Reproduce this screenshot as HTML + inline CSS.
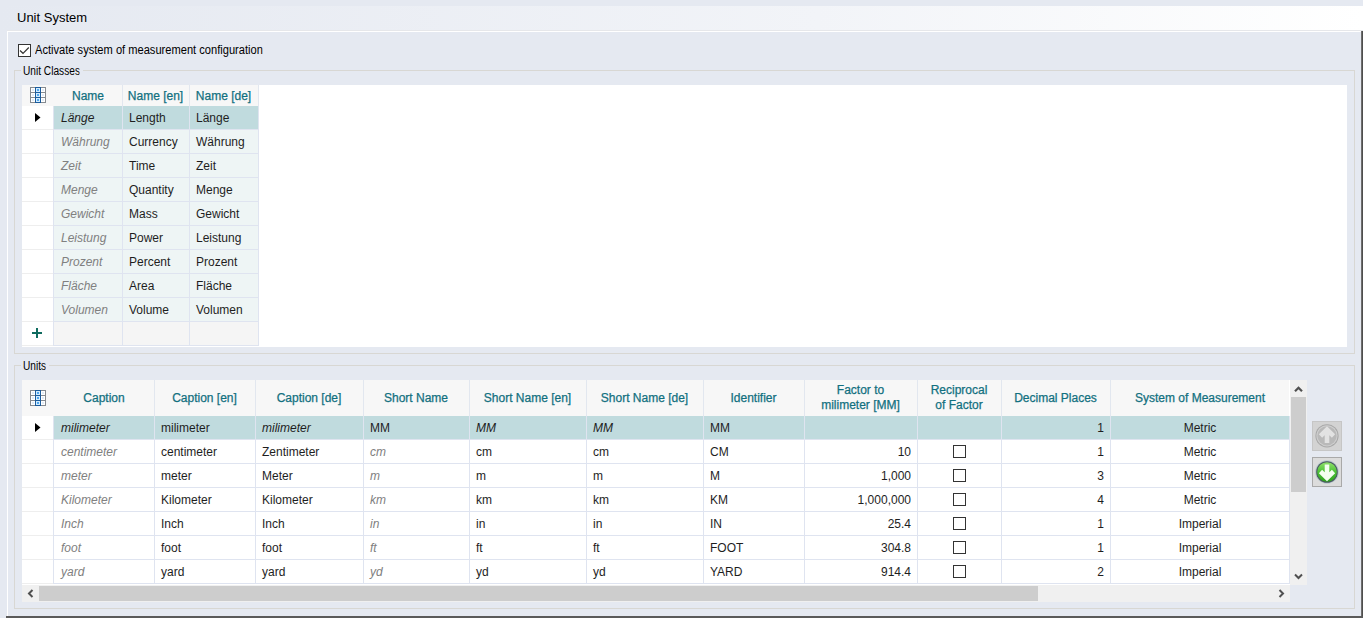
<!DOCTYPE html>
<html><head><meta charset="utf-8"><style>
html,body{margin:0;padding:0;}
body{width:1363px;height:618px;overflow:hidden;position:relative;background:#E5E9F1;font-family:"Liberation Sans", sans-serif;}
.r{position:absolute;box-sizing:border-box;}
svg.r{box-sizing:content-box;}
.c{position:absolute;box-sizing:border-box;font-size:12px;color:#1E1E1E;white-space:nowrap;overflow:hidden;}
.hdr{color:#12707F;-webkit-text-stroke:0.25px #12707F;}
.it{font-style:italic;color:#808080;}
.sel{color:#1E1E1E;}
.plus{color:#1C6E6A;font-size:18px;font-weight:bold;}
</style></head><body>
<div class="r" style="left:0;top:6px;width:1363px;height:24px;background:linear-gradient(to right,#E5E9F1 0%,#F2F4F8 60%,#FFFFFF 100%)"></div>
<div class="r" style="left:7px;top:30px;width:1356px;height:1px;background:#E6E7EA"></div>
<div class="c" style="left:17px;top:9px;font-size:13px;line-height:17px;color:#000">Unit System</div>
<div class="r" style="left:7px;top:31px;width:1356px;height:587px;border-top:1px solid #fff;border-left:1px solid #fff;"></div>
<div class="r" style="left:1361px;top:31px;width:1px;height:587px;background:#6E6E6E"></div>
<div class="r" style="left:1362px;top:31px;width:1px;height:587px;background:#4E4E4E"></div>
<div class="r" style="left:6px;top:616px;width:1357px;height:2px;background:#5A5A5A"></div>
<div class="r" style="left:18px;top:44px;width:13px;height:13px;border:1px solid #333;background:#fff"></div>
<svg class="r" style="left:18px;top:44px" width="13" height="13"><path d="M2 6.5 L5 9.3 L10.8 3.5" fill="none" stroke="#333" stroke-width="1.2"/></svg>
<div class="c" style="left:35px;top:43px;line-height:14px;font-size:12px;color:#000;transform:scaleX(0.926);transform-origin:0 0">Activate system of measurement configuration</div>
<div class="r" style="left:14px;top:70px;width:1341px;height:284px;border:1px solid #D8D7D3;"></div>
<div class="r" style="left:21px;top:64px;width:62px;height:13px;background:#E5E9F1"></div>
<div class="c" style="left:23px;top:65px;line-height:13px;font-size:12px;color:#000;transform:scaleX(0.846);transform-origin:0 0">Unit Classes</div>
<div class="r" style="left:14px;top:365px;width:1341px;height:244px;border:1px solid #D8D7D3;"></div>
<div class="r" style="left:21px;top:359px;width:28px;height:13px;background:#E5E9F1"></div>
<div class="c" style="left:23px;top:360px;line-height:13px;font-size:12px;color:#000;transform:scaleX(0.846);transform-origin:0 0">Units</div>
<div class="r" style="left:22px;top:85px;width:1325px;height:262px;background:#fff"></div>
<div class="r" style="left:22px;top:85px;width:236px;height:21px;background:#F7F7F7"></div>
<svg class="r" style="left:30px;top:87px" width="16" height="16" viewBox="0 0 16 16">
<rect x="0.5" y="0.5" width="15" height="15" fill="#fff" stroke="#858a90"/>
<line x1="0" y1="5.5" x2="16" y2="5.5" stroke="#858a90"/><line x1="0" y1="10.5" x2="16" y2="10.5" stroke="#858a90"/>
<rect x="5.5" y="0.5" width="5" height="15" fill="#D2ECFF" stroke="#1C5C9C"/>
<line x1="5" y1="5.5" x2="11" y2="5.5" stroke="#1C5C9C"/><line x1="5" y1="10.5" x2="11" y2="10.5" stroke="#1C5C9C"/>
<rect x="7" y="2" width="2" height="2" fill="#4FA6EE"/><rect x="7" y="7" width="2" height="2" fill="#4FA6EE"/><rect x="7" y="12" width="2" height="2" fill="#4FA6EE"/>
<g fill="#E2ECF7"><rect x="2" y="2" width="2" height="2"/><rect x="12" y="2" width="2" height="2"/><rect x="2" y="7" width="2" height="2"/><rect x="12" y="7" width="2" height="2"/><rect x="2" y="12" width="2" height="2"/><rect x="12" y="12" width="2" height="2"/></g>
</svg>
<div class="c hdr" style="left:54px;top:86px;width:68px;height:21px;line-height:21px;text-align:center;padding:0 0px;">Name</div>
<div class="r" style="left:122px;top:85px;width:1px;height:21px;background:#E2E7EF"></div>
<div class="c hdr" style="left:122px;top:86px;width:67px;height:21px;line-height:21px;text-align:center;padding:0 0px;">Name [en]</div>
<div class="r" style="left:189px;top:85px;width:1px;height:21px;background:#E2E7EF"></div>
<div class="c hdr" style="left:189px;top:86px;width:69px;height:21px;line-height:21px;text-align:center;padding:0 0px;">Name [de]</div>
<div class="r" style="left:258px;top:85px;width:1px;height:21px;background:#E2E7EF"></div>
<div class="r" style="left:54px;top:106px;width:204px;height:24px;background:#C0DBDE"></div>
<div class="c it sel" style="left:54px;top:107px;width:68px;height:23px;line-height:23px;text-align:left;padding:0 7px;">Länge</div>
<div class="c " style="left:122px;top:107px;width:67px;height:23px;line-height:23px;text-align:left;padding:0 7px;">Length</div>
<div class="c " style="left:189px;top:107px;width:69px;height:23px;line-height:23px;text-align:left;padding:0 7px;">Länge</div>
<div class="r" style="left:22px;top:129px;width:31px;height:1px;background:#EEEEEE"></div>
<div class="r" style="left:54px;top:129px;width:204px;height:1px;background:#DFE4F0"></div>
<svg class="r" style="left:35px;top:113px" width="6" height="9" viewBox="0 0 6 9"><path d="M0 0 L5.5 4.5 L0 9 Z" fill="#000"/></svg>
<div class="r" style="left:54px;top:130px;width:204px;height:24px;background:#EEF5F5"></div>
<div class="c it" style="left:54px;top:131px;width:68px;height:23px;line-height:23px;text-align:left;padding:0 7px;">Währung</div>
<div class="c " style="left:122px;top:131px;width:67px;height:23px;line-height:23px;text-align:left;padding:0 7px;">Currency</div>
<div class="c " style="left:189px;top:131px;width:69px;height:23px;line-height:23px;text-align:left;padding:0 7px;">Währung</div>
<div class="r" style="left:22px;top:153px;width:31px;height:1px;background:#EEEEEE"></div>
<div class="r" style="left:54px;top:153px;width:204px;height:1px;background:#DFE4F0"></div>
<div class="r" style="left:54px;top:154px;width:204px;height:24px;background:#EEF5F5"></div>
<div class="c it" style="left:54px;top:155px;width:68px;height:23px;line-height:23px;text-align:left;padding:0 7px;">Zeit</div>
<div class="c " style="left:122px;top:155px;width:67px;height:23px;line-height:23px;text-align:left;padding:0 7px;">Time</div>
<div class="c " style="left:189px;top:155px;width:69px;height:23px;line-height:23px;text-align:left;padding:0 7px;">Zeit</div>
<div class="r" style="left:22px;top:177px;width:31px;height:1px;background:#EEEEEE"></div>
<div class="r" style="left:54px;top:177px;width:204px;height:1px;background:#DFE4F0"></div>
<div class="r" style="left:54px;top:178px;width:204px;height:24px;background:#EEF5F5"></div>
<div class="c it" style="left:54px;top:179px;width:68px;height:23px;line-height:23px;text-align:left;padding:0 7px;">Menge</div>
<div class="c " style="left:122px;top:179px;width:67px;height:23px;line-height:23px;text-align:left;padding:0 7px;">Quantity</div>
<div class="c " style="left:189px;top:179px;width:69px;height:23px;line-height:23px;text-align:left;padding:0 7px;">Menge</div>
<div class="r" style="left:22px;top:201px;width:31px;height:1px;background:#EEEEEE"></div>
<div class="r" style="left:54px;top:201px;width:204px;height:1px;background:#DFE4F0"></div>
<div class="r" style="left:54px;top:202px;width:204px;height:24px;background:#EEF5F5"></div>
<div class="c it" style="left:54px;top:203px;width:68px;height:23px;line-height:23px;text-align:left;padding:0 7px;">Gewicht</div>
<div class="c " style="left:122px;top:203px;width:67px;height:23px;line-height:23px;text-align:left;padding:0 7px;">Mass</div>
<div class="c " style="left:189px;top:203px;width:69px;height:23px;line-height:23px;text-align:left;padding:0 7px;">Gewicht</div>
<div class="r" style="left:22px;top:225px;width:31px;height:1px;background:#EEEEEE"></div>
<div class="r" style="left:54px;top:225px;width:204px;height:1px;background:#DFE4F0"></div>
<div class="r" style="left:54px;top:226px;width:204px;height:24px;background:#EEF5F5"></div>
<div class="c it" style="left:54px;top:227px;width:68px;height:23px;line-height:23px;text-align:left;padding:0 7px;">Leistung</div>
<div class="c " style="left:122px;top:227px;width:67px;height:23px;line-height:23px;text-align:left;padding:0 7px;">Power</div>
<div class="c " style="left:189px;top:227px;width:69px;height:23px;line-height:23px;text-align:left;padding:0 7px;">Leistung</div>
<div class="r" style="left:22px;top:249px;width:31px;height:1px;background:#EEEEEE"></div>
<div class="r" style="left:54px;top:249px;width:204px;height:1px;background:#DFE4F0"></div>
<div class="r" style="left:54px;top:250px;width:204px;height:24px;background:#EEF5F5"></div>
<div class="c it" style="left:54px;top:251px;width:68px;height:23px;line-height:23px;text-align:left;padding:0 7px;">Prozent</div>
<div class="c " style="left:122px;top:251px;width:67px;height:23px;line-height:23px;text-align:left;padding:0 7px;">Percent</div>
<div class="c " style="left:189px;top:251px;width:69px;height:23px;line-height:23px;text-align:left;padding:0 7px;">Prozent</div>
<div class="r" style="left:22px;top:273px;width:31px;height:1px;background:#EEEEEE"></div>
<div class="r" style="left:54px;top:273px;width:204px;height:1px;background:#DFE4F0"></div>
<div class="r" style="left:54px;top:274px;width:204px;height:24px;background:#EEF5F5"></div>
<div class="c it" style="left:54px;top:275px;width:68px;height:23px;line-height:23px;text-align:left;padding:0 7px;">Fläche</div>
<div class="c " style="left:122px;top:275px;width:67px;height:23px;line-height:23px;text-align:left;padding:0 7px;">Area</div>
<div class="c " style="left:189px;top:275px;width:69px;height:23px;line-height:23px;text-align:left;padding:0 7px;">Fläche</div>
<div class="r" style="left:22px;top:297px;width:31px;height:1px;background:#EEEEEE"></div>
<div class="r" style="left:54px;top:297px;width:204px;height:1px;background:#DFE4F0"></div>
<div class="r" style="left:54px;top:298px;width:204px;height:24px;background:#EEF5F5"></div>
<div class="c it" style="left:54px;top:299px;width:68px;height:23px;line-height:23px;text-align:left;padding:0 7px;">Volumen</div>
<div class="c " style="left:122px;top:299px;width:67px;height:23px;line-height:23px;text-align:left;padding:0 7px;">Volume</div>
<div class="c " style="left:189px;top:299px;width:69px;height:23px;line-height:23px;text-align:left;padding:0 7px;">Volumen</div>
<div class="r" style="left:22px;top:321px;width:31px;height:1px;background:#EEEEEE"></div>
<div class="r" style="left:54px;top:321px;width:204px;height:1px;background:#DFE4F0"></div>
<div class="r" style="left:54px;top:322px;width:204px;height:23px;background:#F5F5F5"></div>
<div class="r" style="left:22px;top:345px;width:31px;height:1px;background:#EEEEEE"></div>
<div class="r" style="left:54px;top:345px;width:204px;height:1px;background:#DFE4F0"></div>
<svg class="r" style="left:32px;top:328px" width="10" height="10"><path d="M0 5 H10 M5 0 V10" stroke="#0F6B5F" stroke-width="2"/></svg>
<div class="r" style="left:122px;top:106px;width:1px;height:240px;background:#DFE4F0"></div>
<div class="r" style="left:189px;top:106px;width:1px;height:240px;background:#DFE4F0"></div>
<div class="r" style="left:258px;top:106px;width:1px;height:240px;background:#DFE4F0"></div>
<div class="r" style="left:53px;top:106px;width:1px;height:240px;background:#DFE4F0"></div>
<div class="r" style="left:22px;top:380px;width:1268px;height:205px;background:#fff"></div>
<div class="r" style="left:22px;top:380px;width:1267px;height:36px;background:#F7F7F7"></div>
<svg class="r" style="left:30px;top:390px" width="16" height="16" viewBox="0 0 16 16">
<rect x="0.5" y="0.5" width="15" height="15" fill="#fff" stroke="#858a90"/>
<line x1="0" y1="5.5" x2="16" y2="5.5" stroke="#858a90"/><line x1="0" y1="10.5" x2="16" y2="10.5" stroke="#858a90"/>
<rect x="5.5" y="0.5" width="5" height="15" fill="#D2ECFF" stroke="#1C5C9C"/>
<line x1="5" y1="5.5" x2="11" y2="5.5" stroke="#1C5C9C"/><line x1="5" y1="10.5" x2="11" y2="10.5" stroke="#1C5C9C"/>
<rect x="7" y="2" width="2" height="2" fill="#4FA6EE"/><rect x="7" y="7" width="2" height="2" fill="#4FA6EE"/><rect x="7" y="12" width="2" height="2" fill="#4FA6EE"/>
<g fill="#E2ECF7"><rect x="2" y="2" width="2" height="2"/><rect x="12" y="2" width="2" height="2"/><rect x="2" y="7" width="2" height="2"/><rect x="12" y="7" width="2" height="2"/><rect x="2" y="12" width="2" height="2"/><rect x="12" y="12" width="2" height="2"/></g>
</svg>
<div class="c hdr" style="left:54px;top:380px;width:100px;height:36px;line-height:36px;text-align:center;padding:0 0px;">Caption</div>
<div class="r" style="left:154px;top:380px;width:1px;height:36px;background:#E2E7EF"></div>
<div class="c hdr" style="left:154px;top:380px;width:101px;height:36px;line-height:36px;text-align:center;padding:0 0px;">Caption [en]</div>
<div class="r" style="left:255px;top:380px;width:1px;height:36px;background:#E2E7EF"></div>
<div class="c hdr" style="left:255px;top:380px;width:108px;height:36px;line-height:36px;text-align:center;padding:0 0px;">Caption [de]</div>
<div class="r" style="left:363px;top:380px;width:1px;height:36px;background:#E2E7EF"></div>
<div class="c hdr" style="left:363px;top:380px;width:106px;height:36px;line-height:36px;text-align:center;padding:0 0px;">Short Name</div>
<div class="r" style="left:469px;top:380px;width:1px;height:36px;background:#E2E7EF"></div>
<div class="c hdr" style="left:469px;top:380px;width:117px;height:36px;line-height:36px;text-align:center;padding:0 0px;">Short Name [en]</div>
<div class="r" style="left:586px;top:380px;width:1px;height:36px;background:#E2E7EF"></div>
<div class="c hdr" style="left:586px;top:380px;width:117px;height:36px;line-height:36px;text-align:center;padding:0 0px;">Short Name [de]</div>
<div class="r" style="left:703px;top:380px;width:1px;height:36px;background:#E2E7EF"></div>
<div class="c hdr" style="left:703px;top:380px;width:101px;height:36px;line-height:36px;text-align:center;padding:0 0px;">Identifier</div>
<div class="r" style="left:804px;top:380px;width:1px;height:36px;background:#E2E7EF"></div>
<div class="c hdr" style="left:804px;top:380px;width:113px;height:36px;text-align:center;line-height:15px;padding-top:3px">Factor to<br>milimeter [MM]</div>
<div class="r" style="left:917px;top:380px;width:1px;height:36px;background:#E2E7EF"></div>
<div class="c hdr" style="left:917px;top:380px;width:84px;height:36px;text-align:center;line-height:15px;padding-top:3px">Reciprocal<br>of Factor</div>
<div class="r" style="left:1001px;top:380px;width:1px;height:36px;background:#E2E7EF"></div>
<div class="c hdr" style="left:1001px;top:380px;width:109px;height:36px;line-height:36px;text-align:center;padding:0 0px;">Decimal Places</div>
<div class="r" style="left:1110px;top:380px;width:1px;height:36px;background:#E2E7EF"></div>
<div class="c hdr" style="left:1110px;top:380px;width:180px;height:36px;line-height:36px;text-align:center;padding:0 0px;">System of Measurement</div>
<div class="r" style="left:53px;top:380px;width:0px;height:0px;"></div>
<div class="r" style="left:54px;top:416px;width:1235px;height:24px;background:#C0DBDE"></div>
<svg class="r" style="left:35px;top:423px" width="6" height="9" viewBox="0 0 6 9"><path d="M0 0 L5.5 4.5 L0 9 Z" fill="#000"/></svg>
<div class="c it sel" style="left:54px;top:417px;width:100px;height:23px;line-height:23px;text-align:left;padding:0 7px;">milimeter</div>
<div class="c " style="left:154px;top:417px;width:101px;height:23px;line-height:23px;text-align:left;padding:0 7px;">milimeter</div>
<div class="c it sel" style="left:255px;top:417px;width:108px;height:23px;line-height:23px;text-align:left;padding:0 7px;">milimeter</div>
<div class="c " style="left:363px;top:417px;width:106px;height:23px;line-height:23px;text-align:left;padding:0 7px;">MM</div>
<div class="c it sel" style="left:469px;top:417px;width:117px;height:23px;line-height:23px;text-align:left;padding:0 7px;">MM</div>
<div class="c it sel" style="left:586px;top:417px;width:117px;height:23px;line-height:23px;text-align:left;padding:0 7px;">MM</div>
<div class="c " style="left:703px;top:417px;width:101px;height:23px;line-height:23px;text-align:left;padding:0 7px;">MM</div>
<div class="c " style="left:804px;top:417px;width:113px;height:23px;line-height:23px;text-align:right;padding:0 6px;"></div>
<div class="c " style="left:1001px;top:417px;width:109px;height:23px;line-height:23px;text-align:right;padding:0 6px;">1</div>
<div class="c " style="left:1110px;top:417px;width:180px;height:23px;line-height:23px;text-align:center;padding:0 7px;">Metric</div>
<div class="r" style="left:22px;top:439px;width:31px;height:1px;background:#EEEEEE"></div>
<div class="r" style="left:54px;top:439px;width:1235px;height:1px;background:#DFE4F0"></div>
<div class="c it" style="left:54px;top:441px;width:100px;height:23px;line-height:23px;text-align:left;padding:0 7px;">centimeter</div>
<div class="c " style="left:154px;top:441px;width:101px;height:23px;line-height:23px;text-align:left;padding:0 7px;">centimeter</div>
<div class="c " style="left:255px;top:441px;width:108px;height:23px;line-height:23px;text-align:left;padding:0 7px;">Zentimeter</div>
<div class="c it" style="left:363px;top:441px;width:106px;height:23px;line-height:23px;text-align:left;padding:0 7px;">cm</div>
<div class="c " style="left:469px;top:441px;width:117px;height:23px;line-height:23px;text-align:left;padding:0 7px;">cm</div>
<div class="c " style="left:586px;top:441px;width:117px;height:23px;line-height:23px;text-align:left;padding:0 7px;">cm</div>
<div class="c " style="left:703px;top:441px;width:101px;height:23px;line-height:23px;text-align:left;padding:0 7px;">CM</div>
<div class="c " style="left:804px;top:441px;width:113px;height:23px;line-height:23px;text-align:right;padding:0 6px;">10</div>
<div class="r" style="left:953px;top:445px;width:13px;height:13px;border:1px solid #333;background:#fff"></div>
<div class="c " style="left:1001px;top:441px;width:109px;height:23px;line-height:23px;text-align:right;padding:0 6px;">1</div>
<div class="c " style="left:1110px;top:441px;width:180px;height:23px;line-height:23px;text-align:center;padding:0 7px;">Metric</div>
<div class="r" style="left:22px;top:463px;width:31px;height:1px;background:#EEEEEE"></div>
<div class="r" style="left:54px;top:463px;width:1235px;height:1px;background:#DFE4F0"></div>
<div class="c it" style="left:54px;top:465px;width:100px;height:23px;line-height:23px;text-align:left;padding:0 7px;">meter</div>
<div class="c " style="left:154px;top:465px;width:101px;height:23px;line-height:23px;text-align:left;padding:0 7px;">meter</div>
<div class="c " style="left:255px;top:465px;width:108px;height:23px;line-height:23px;text-align:left;padding:0 7px;">Meter</div>
<div class="c it" style="left:363px;top:465px;width:106px;height:23px;line-height:23px;text-align:left;padding:0 7px;">m</div>
<div class="c " style="left:469px;top:465px;width:117px;height:23px;line-height:23px;text-align:left;padding:0 7px;">m</div>
<div class="c " style="left:586px;top:465px;width:117px;height:23px;line-height:23px;text-align:left;padding:0 7px;">m</div>
<div class="c " style="left:703px;top:465px;width:101px;height:23px;line-height:23px;text-align:left;padding:0 7px;">M</div>
<div class="c " style="left:804px;top:465px;width:113px;height:23px;line-height:23px;text-align:right;padding:0 6px;">1,000</div>
<div class="r" style="left:953px;top:469px;width:13px;height:13px;border:1px solid #333;background:#fff"></div>
<div class="c " style="left:1001px;top:465px;width:109px;height:23px;line-height:23px;text-align:right;padding:0 6px;">3</div>
<div class="c " style="left:1110px;top:465px;width:180px;height:23px;line-height:23px;text-align:center;padding:0 7px;">Metric</div>
<div class="r" style="left:22px;top:487px;width:31px;height:1px;background:#EEEEEE"></div>
<div class="r" style="left:54px;top:487px;width:1235px;height:1px;background:#DFE4F0"></div>
<div class="c it" style="left:54px;top:489px;width:100px;height:23px;line-height:23px;text-align:left;padding:0 7px;">Kilometer</div>
<div class="c " style="left:154px;top:489px;width:101px;height:23px;line-height:23px;text-align:left;padding:0 7px;">Kilometer</div>
<div class="c " style="left:255px;top:489px;width:108px;height:23px;line-height:23px;text-align:left;padding:0 7px;">Kilometer</div>
<div class="c it" style="left:363px;top:489px;width:106px;height:23px;line-height:23px;text-align:left;padding:0 7px;">km</div>
<div class="c " style="left:469px;top:489px;width:117px;height:23px;line-height:23px;text-align:left;padding:0 7px;">km</div>
<div class="c " style="left:586px;top:489px;width:117px;height:23px;line-height:23px;text-align:left;padding:0 7px;">km</div>
<div class="c " style="left:703px;top:489px;width:101px;height:23px;line-height:23px;text-align:left;padding:0 7px;">KM</div>
<div class="c " style="left:804px;top:489px;width:113px;height:23px;line-height:23px;text-align:right;padding:0 6px;">1,000,000</div>
<div class="r" style="left:953px;top:493px;width:13px;height:13px;border:1px solid #333;background:#fff"></div>
<div class="c " style="left:1001px;top:489px;width:109px;height:23px;line-height:23px;text-align:right;padding:0 6px;">4</div>
<div class="c " style="left:1110px;top:489px;width:180px;height:23px;line-height:23px;text-align:center;padding:0 7px;">Metric</div>
<div class="r" style="left:22px;top:511px;width:31px;height:1px;background:#EEEEEE"></div>
<div class="r" style="left:54px;top:511px;width:1235px;height:1px;background:#DFE4F0"></div>
<div class="c it" style="left:54px;top:513px;width:100px;height:23px;line-height:23px;text-align:left;padding:0 7px;">Inch</div>
<div class="c " style="left:154px;top:513px;width:101px;height:23px;line-height:23px;text-align:left;padding:0 7px;">Inch</div>
<div class="c " style="left:255px;top:513px;width:108px;height:23px;line-height:23px;text-align:left;padding:0 7px;">Inch</div>
<div class="c it" style="left:363px;top:513px;width:106px;height:23px;line-height:23px;text-align:left;padding:0 7px;">in</div>
<div class="c " style="left:469px;top:513px;width:117px;height:23px;line-height:23px;text-align:left;padding:0 7px;">in</div>
<div class="c " style="left:586px;top:513px;width:117px;height:23px;line-height:23px;text-align:left;padding:0 7px;">in</div>
<div class="c " style="left:703px;top:513px;width:101px;height:23px;line-height:23px;text-align:left;padding:0 7px;">IN</div>
<div class="c " style="left:804px;top:513px;width:113px;height:23px;line-height:23px;text-align:right;padding:0 6px;">25.4</div>
<div class="r" style="left:953px;top:517px;width:13px;height:13px;border:1px solid #333;background:#fff"></div>
<div class="c " style="left:1001px;top:513px;width:109px;height:23px;line-height:23px;text-align:right;padding:0 6px;">1</div>
<div class="c " style="left:1110px;top:513px;width:180px;height:23px;line-height:23px;text-align:center;padding:0 7px;">Imperial</div>
<div class="r" style="left:22px;top:535px;width:31px;height:1px;background:#EEEEEE"></div>
<div class="r" style="left:54px;top:535px;width:1235px;height:1px;background:#DFE4F0"></div>
<div class="c it" style="left:54px;top:537px;width:100px;height:23px;line-height:23px;text-align:left;padding:0 7px;">foot</div>
<div class="c " style="left:154px;top:537px;width:101px;height:23px;line-height:23px;text-align:left;padding:0 7px;">foot</div>
<div class="c " style="left:255px;top:537px;width:108px;height:23px;line-height:23px;text-align:left;padding:0 7px;">foot</div>
<div class="c it" style="left:363px;top:537px;width:106px;height:23px;line-height:23px;text-align:left;padding:0 7px;">ft</div>
<div class="c " style="left:469px;top:537px;width:117px;height:23px;line-height:23px;text-align:left;padding:0 7px;">ft</div>
<div class="c " style="left:586px;top:537px;width:117px;height:23px;line-height:23px;text-align:left;padding:0 7px;">ft</div>
<div class="c " style="left:703px;top:537px;width:101px;height:23px;line-height:23px;text-align:left;padding:0 7px;">FOOT</div>
<div class="c " style="left:804px;top:537px;width:113px;height:23px;line-height:23px;text-align:right;padding:0 6px;">304.8</div>
<div class="r" style="left:953px;top:541px;width:13px;height:13px;border:1px solid #333;background:#fff"></div>
<div class="c " style="left:1001px;top:537px;width:109px;height:23px;line-height:23px;text-align:right;padding:0 6px;">1</div>
<div class="c " style="left:1110px;top:537px;width:180px;height:23px;line-height:23px;text-align:center;padding:0 7px;">Imperial</div>
<div class="r" style="left:22px;top:559px;width:31px;height:1px;background:#EEEEEE"></div>
<div class="r" style="left:54px;top:559px;width:1235px;height:1px;background:#DFE4F0"></div>
<div class="c it" style="left:54px;top:561px;width:100px;height:23px;line-height:23px;text-align:left;padding:0 7px;">yard</div>
<div class="c " style="left:154px;top:561px;width:101px;height:23px;line-height:23px;text-align:left;padding:0 7px;">yard</div>
<div class="c " style="left:255px;top:561px;width:108px;height:23px;line-height:23px;text-align:left;padding:0 7px;">yard</div>
<div class="c it" style="left:363px;top:561px;width:106px;height:23px;line-height:23px;text-align:left;padding:0 7px;">yd</div>
<div class="c " style="left:469px;top:561px;width:117px;height:23px;line-height:23px;text-align:left;padding:0 7px;">yd</div>
<div class="c " style="left:586px;top:561px;width:117px;height:23px;line-height:23px;text-align:left;padding:0 7px;">yd</div>
<div class="c " style="left:703px;top:561px;width:101px;height:23px;line-height:23px;text-align:left;padding:0 7px;">YARD</div>
<div class="c " style="left:804px;top:561px;width:113px;height:23px;line-height:23px;text-align:right;padding:0 6px;">914.4</div>
<div class="r" style="left:953px;top:565px;width:13px;height:13px;border:1px solid #333;background:#fff"></div>
<div class="c " style="left:1001px;top:561px;width:109px;height:23px;line-height:23px;text-align:right;padding:0 6px;">2</div>
<div class="c " style="left:1110px;top:561px;width:180px;height:23px;line-height:23px;text-align:center;padding:0 7px;">Imperial</div>
<div class="r" style="left:22px;top:583px;width:31px;height:1px;background:#EEEEEE"></div>
<div class="r" style="left:54px;top:583px;width:1235px;height:1px;background:#DFE4F0"></div>
<div class="r" style="left:154px;top:416px;width:1px;height:168px;background:#DFE4F0"></div>
<div class="r" style="left:255px;top:416px;width:1px;height:168px;background:#DFE4F0"></div>
<div class="r" style="left:363px;top:416px;width:1px;height:168px;background:#DFE4F0"></div>
<div class="r" style="left:469px;top:416px;width:1px;height:168px;background:#DFE4F0"></div>
<div class="r" style="left:586px;top:416px;width:1px;height:168px;background:#DFE4F0"></div>
<div class="r" style="left:703px;top:416px;width:1px;height:168px;background:#DFE4F0"></div>
<div class="r" style="left:804px;top:416px;width:1px;height:168px;background:#DFE4F0"></div>
<div class="r" style="left:917px;top:416px;width:1px;height:168px;background:#DFE4F0"></div>
<div class="r" style="left:1001px;top:416px;width:1px;height:168px;background:#DFE4F0"></div>
<div class="r" style="left:1110px;top:416px;width:1px;height:168px;background:#DFE4F0"></div>
<div class="r" style="left:1289px;top:416px;width:1px;height:168px;background:#DFE4F0"></div>
<div class="r" style="left:53px;top:416px;width:1px;height:168px;background:#DFE4F0"></div>
<div class="r" style="left:1290px;top:380px;width:17px;height:205px;background:#F0F0F0"></div>
<div class="r" style="left:1291px;top:397px;width:15px;height:95px;background:#CDCDCD"></div>
<svg class="r" style="left:1290px;top:380px" width="17" height="17"><path d="M5 11.2 L8.5 7.7 L12 11.2" fill="none" stroke="#505050" stroke-width="2.2"/></svg>
<svg class="r" style="left:1290px;top:568px" width="17" height="17"><path d="M5 6.5 L8.5 10 L12 6.5" fill="none" stroke="#505050" stroke-width="2"/></svg>
<div class="r" style="left:22px;top:585px;width:1268px;height:17px;background:#F0F0F0"></div>
<div class="r" style="left:39px;top:586px;width:999px;height:15px;background:#CDCDCD"></div>
<svg class="r" style="left:22px;top:585px" width="17" height="17"><path d="M10.5 5 L7 8.5 L10.5 12" fill="none" stroke="#505050" stroke-width="2"/></svg>
<svg class="r" style="left:1273px;top:585px" width="17" height="17"><path d="M6.5 5 L10 8.5 L6.5 12" fill="none" stroke="#505050" stroke-width="2"/></svg>
<div class="r" style="left:1312px;top:421px;width:30px;height:30px;border:1px solid #C6C6C6;background:#D3D3D3"></div>
<svg class="r" style="left:1312px;top:421px" width="30" height="30" viewBox="0 0 30 30">
<circle cx="15" cy="14.8" r="11.6" fill="#A8A8A8"/><circle cx="15" cy="14.8" r="10.6" fill="#CFCFCF"/><circle cx="15" cy="14.8" r="9.6" fill="#B9B9B9"/>
<path d="M15 22 V9 M8.5 15 L15 8.5 L21.5 15" fill="none" stroke="#E2E2E2" stroke-width="4.6" stroke-linejoin="miter" stroke-linecap="butt"/></svg>
<div class="r" style="left:1312px;top:457px;width:30px;height:30px;border:1px solid #A9A9A9;background:#DCDCDC"></div>
<svg class="r" style="left:1312px;top:457px" width="30" height="30" viewBox="0 0 30 30">
<defs><linearGradient id="gg" x1="0" y1="0" x2="0" y2="1"><stop offset="0" stop-color="#8FE06A"/><stop offset="0.5" stop-color="#4CC236"/><stop offset="1" stop-color="#2FA21F"/></linearGradient></defs>
<circle cx="15" cy="15" r="11.8" fill="#B8C8CC"/><circle cx="15" cy="15" r="10.8" fill="#4A5A60"/><circle cx="15" cy="15" r="9.8" fill="url(#gg)"/>
<path d="M15 7.5 V20.5 M8.5 14.5 L15 21 L21.5 14.5" fill="none" stroke="#F4FFF0" stroke-width="4.6" stroke-linejoin="miter" stroke-linecap="butt"/></svg>
</body></html>
